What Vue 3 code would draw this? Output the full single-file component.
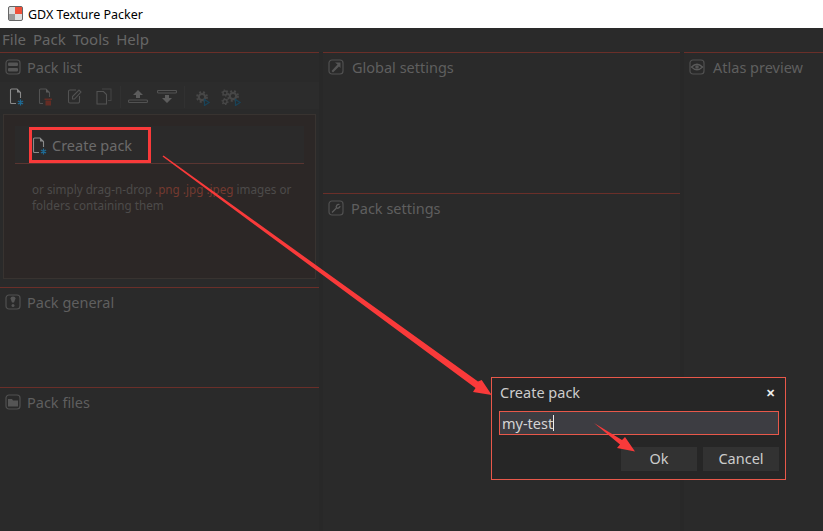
<script setup>
const menus = ['File', 'Pack', 'Tools', 'Help']
</script>

<template>
  <div class="win">
    <header class="titlebar">
      <svg class="logo" width="16" height="16" viewBox="0 0 16 16">
        <rect x="0.500" y="0.500" width="14" height="14" rx="1.500" fill="#ddd" stroke="#666" />
        <rect x="7" y="1" width="7" height="7" fill="#f0503a" />
        <rect x="1" y="8" width="6" height="6" fill="#999" />
      </svg>
      <span>GDX Texture Packer</span>
    </header>
    <nav class="menubar">
      <span v-for="m in menus" :key="m">{{ m }}</span>
    </nav>
    <main class="columns">
      <section class="col left">
        <div class="panel list">
          <h2 class="head">
            <svg class="hicon" viewBox="0 0 16 16"><rect x="1" y="1" width="14" height="14" rx="3" /><rect class="fill" x="3" y="3.500" width="10" height="3.500" rx="1" /><rect class="fill" x="3" y="9" width="10" height="3.500" rx="1" /></svg>
            Pack list
          </h2>
          <div class="toolbar">
            <div class="tools">
              <svg width="16" height="19" viewBox="0 0 16 19"><path class="doc hi" d="M7 16.500H2.500A1 1 0 0 1 1.500 15.500V3A1 1 0 0 1 2.500 2H8L11.500 5.500V11" /><path class="solid hi" d="M8 2L11.500 5.500H8Z" /><path class="star" d="M11.500 12.500v6M8.900 14l5.200 3M14.100 14l-5.200 3" /></svg>
              <svg width="16" height="19" viewBox="0 0 16 19"><path class="doc" d="M5 16.500H2.500A1 1 0 0 1 1.500 15.500V3A1 1 0 0 1 2.500 2H8L11.500 5.500V10" /><path class="solid" d="M8 2L11.500 5.500H8Z" /><rect x="7.500" y="13.500" width="5.500" height="5" fill="#652c24" /><rect x="6.500" y="11.500" width="7.500" height="1.500" fill="#652c24" /></svg>
              <svg width="16" height="19" viewBox="0 0 16 19"><path class="doc" d="M9 3H3A1.500 1.500 0 0 0 1.500 4.500V14.500A1.500 1.500 0 0 0 3 16H11A1.500 1.500 0 0 0 12.500 14.500V9" /><path class="doc" d="M5.500 12V9.500L12 3L14 5L7.500 12Z" /></svg>
              <svg width="16" height="19" viewBox="0 0 16 19"><path class="doc dim" d="M6 2H15V13.500H12" /><path class="doc" d="M1 4.500H7.500L10.500 7.500V17H1Z" /></svg>
            </div>
            <i class="sep" />
            <div class="tools wide">
              <svg width="20" height="14" viewBox="0 0 20 14"><path class="solid" d="M10 0L15 5H12V8H8V5H5Z" /><rect class="doc" x="0.500" y="10" width="19" height="2.500" rx="1" /></svg>
              <svg width="20" height="14" viewBox="0 0 20 14"><rect class="doc" x="0.500" y="0.500" width="19" height="2.500" rx="1" /><path class="solid" d="M10 13L5 8H8V5H12V8H15Z" /></svg>
            </div>
            <i class="sep" />
            <div class="tools gears">
              <svg width="16" height="18" viewBox="0 0 16 18"><circle class="gear" cx="6" cy="9" r="3.200" /><circle class="teeth" cx="6" cy="9" r="5" /><path class="play" d="M8.500 11.500L13 14.500L8.500 17.500Z" /></svg>
              <svg width="21" height="18" viewBox="0 0 21 18"><circle class="gear small" cx="4" cy="5" r="2" /><circle class="teeth small" cx="4" cy="5" r="3" /><circle class="gear small" cx="4" cy="13.500" r="2" /><circle class="teeth small" cx="4" cy="13.500" r="3" /><circle class="gear" cx="12" cy="8" r="3.200" /><circle class="teeth" cx="12" cy="8" r="5" /><path class="play" d="M14.500 11.500L19 14.500L14.500 17.500Z" /></svg>
            </div>
          </div>
          <div class="body">
            <div class="create">
              <div class="create-row">
                <svg width="16" height="19" viewBox="0 0 16 19"><path class="doc hi" d="M7 16.500H2.500A1 1 0 0 1 1.500 15.500V3A1 1 0 0 1 2.500 2H8L11.500 5.500V11" /><path class="solid hi" d="M8 2L11.500 5.500H8Z" /><path class="star" d="M11.500 12.500v6M8.900 14l5.200 3M14.100 14l-5.200 3" /></svg>
                <span>Create pack</span>
              </div>
            </div>
            <p class="hint">or simply drag-n-drop <b>.png .jpg .jpeg</b> images or folders containing them</p>
          </div>
        </div>
        <div class="panel general">
          <h2 class="head">
            <svg class="hicon" viewBox="0 0 16 16"><rect x="1" y="1" width="14" height="14" rx="3" /><path class="fill" d="M5.500 4.500A2.500 2 0 0 1 10.500 4.500L9 8.500H7Z" /><circle class="fill" cx="8" cy="11.500" r="1.500" /></svg>
            Pack general
          </h2>
        </div>
        <div class="panel files">
          <h2 class="head">
            <svg class="hicon" viewBox="0 0 16 16"><rect x="1" y="1" width="14" height="14" rx="3" /><path class="fill" d="M3 5H7L8 6.500H13V12.500H3Z" /></svg>
            Pack files
          </h2>
        </div>
      </section>
      <section class="col middle">
        <div class="panel global">
          <h2 class="head atlas">
            <svg class="hicon" viewBox="0 0 16 16"><rect x="1" y="1" width="14" height="14" rx="3" /><path class="fill" d="M7 3.500H12.500V9L11 7.500L5 13.500L3.500 12L9.500 5.500Z" /></svg>
            Global settings
          </h2>
        </div>
        <div class="panel settings">
          <h2 class="head wide-gap">
            <svg class="hicon" viewBox="0 0 16 16"><rect x="1" y="1" width="14" height="14" rx="3" /><path class="wrench" d="M4 12.500L8.500 8M8.500 8A2.500 2.500 0 0 1 11.500 4.500M8.500 8A2.500 2.500 0 0 0 12 6" /></svg>
            Pack settings
          </h2>
        </div>
      </section>
      <section class="col right">
        <div class="panel preview">
          <h2 class="head atlas">
            <svg class="hicon" viewBox="0 0 16 16"><rect x="1" y="1" width="14" height="14" rx="3" /><path class="wrench" d="M2.500 8Q8 2.500 13.500 8Q8 13.500 2.500 8Z" /><circle class="fill" cx="8" cy="8" r="1.800" /></svg>
            Atlas preview
          </h2>
        </div>
      </section>
    </main>

    <div class="dialog">
      <div class="dlg-title"><span>Create pack</span><b>✕</b></div>
      <div class="input">my-test<i class="caret" /></div>
      <div class="actions">
        <button type="button">Ok</button>
        <button type="button">Cancel</button>
      </div>
    </div>

    <svg class="marks" width="823" height="531" viewBox="0 0 823 531">
      <rect x="30.500" y="128.500" width="119" height="33" fill="none" stroke="#f93a3a" stroke-width="3" />
      <path d="M163.500 155.500L478 381.500L481.700 380L491.700 395L473 392L475.500 388L162.500 156.500Z" fill="#f93a3a" />
      <path d="M594 423L622 440L625 437L635 451.500L617 448L620 444.500Z" fill="#f93a3a" />
    </svg>
  </div>
</template>

<style scoped>
.win {
  position: relative;
  width: 823px;
  height: 531px;
  overflow: hidden;
  display: flex;
  flex-direction: column;
  background: #2a2a2a;
  font-family: "Noto Sans", "Open Sans", sans-serif;
  color: #626262;
}
.titlebar {
  height: 28px;
  flex: none;
  background: #fff;
  display: flex;
  align-items: center;
  gap: 4px;
  padding-left: 8px;
  color: #000;
  font-size: 12.500px;
}
.menubar {
  height: 24px;
  box-sizing: border-box;
  flex: none;
  display: flex;
  align-items: center;
  gap: 7px;
  padding: 0 0 2px 2px;
  font-size: 15px;
  color: #666;
}
.columns {
  flex: 1;
  min-height: 0;
  display: flex;
  gap: 4px;
  background: #282828;
}
.col {
  display: flex;
  flex-direction: column;
  background: #2a2a2a;
}
.left { width: 319px; }
.middle { width: 357px; }
.right { flex: 1; }
.panel {
  box-sizing: border-box;
  border-top: 1px solid #6a2f29;
  min-height: 0;
}
.list { height: 235px; }
.general { height: 100px; }
.files { flex: 1; }
.global { height: 141px; }
.settings { flex: 1; }
.preview { flex: 1; }
.head {
  margin: 0;
  height: 29px;
  box-sizing: border-box;
  display: flex;
  align-items: center;
  gap: 6px;
  padding: 0 0 2px 5px;
  font-size: 14.500px;
  font-weight: 400;
  color: #5f5f5f;
}
.head.wide-gap { gap: 7px; }
.head.atlas { gap: 8px; }
.hicon {
  width: 16px;
  height: 16px;
  fill: none;
  stroke: #505050;
  stroke-width: 1.200;
  flex: none;
}
.hicon .fill { fill: #555; stroke: none; }
.hicon .wrench { stroke: #5a5a5a; stroke-width: 1.300; fill: none; }
.toolbar {
  height: 27px;
  box-sizing: border-box;
  display: flex;
  align-items: center;
  padding: 2px 0 0 9px;
  background: #2c2c2c;
}
.tools {
  display: flex;
  align-items: center;
  gap: 13px;
}
.tools.wide { gap: 9px; margin: 0 7px; }
.tools.gears { gap: 9px; margin-left: 11px; align-items: flex-start; }
.sep {
  width: 1px;
  height: 22px;
  background: #313131;
  margin-left: 8px;
}
.tools.wide + .sep { margin-left: 0; }
.doc { fill: none; stroke: #525252; stroke-width: 1.100; }
.doc.hi { stroke: #8a8a8a; }
.doc.dim { stroke: #444; }
.solid { fill: #5c5c5c; }
.solid.hi { fill: #8a8a8a; }
.star { stroke: #1f6a94; stroke-width: 1.300; fill: none; }
.gear { fill: none; stroke: #474747; stroke-width: 2.200; }
.gear.small { stroke-width: 1.400; }
.teeth { fill: none; stroke: #474747; stroke-width: 1.800; stroke-dasharray: 2 2; }
.teeth.small { stroke-width: 1.200; stroke-dasharray: 1.500 1.600; }
.play { fill: #2a2a2a; stroke: #1a4358; stroke-width: 1.300; }
.body {
  box-sizing: border-box;
  margin: 5px 3px 0 3px;
  height: 165px;
  border: 1px solid #383330;
  background: #2c2726;
  padding-top: 11px;
}
.create {
  margin: 0 11px;
  height: 38px;
  border-bottom: 1px solid #5a3531;
  background: #2b2a2a;
  box-sizing: border-box;
}
.create-row {
  display: flex;
  align-items: center;
  gap: 3px;
  padding: 9px 0 0 17px;
  font-size: 14.500px;
  color: #6b6b6b;
}
.create-row span { margin-left: 1px; }
.hint {
  margin: 17px 16px 0 28px;
  font-size: 11.700px;
  line-height: 16px;
  color: #4d4b4a;
}
.hint b { font-weight: 400; color: #743a30; }
.dialog {
  position: absolute;
  left: 491px;
  top: 377px;
  width: 295px;
  height: 103px;
  box-sizing: border-box;
  border: 1px solid #e8584a;
  background: #262626;
  padding: 0 6px 0 7px;
  color: #ccc;
}
.dlg-title {
  height: 28px;
  display: flex;
  align-items: center;
  justify-content: space-between;
  padding: 0 1px;
  font-size: 14.500px;
}
.dlg-title b {
  font-size: 11px;
  color: #eee;
  margin-right: 3px;
}
.input {
  margin-top: 5px;
  height: 24px;
  box-sizing: border-box;
  border: 1px solid #e8584a;
  background: #3d3d42;
  padding-left: 2px;
  display: flex;
  align-items: center;
  font-size: 14.500px;
  color: #d4d4d4;
}
.caret {
  width: 1px;
  height: 16px;
  background: #eee;
}
.actions {
  margin-top: 12px;
  display: flex;
  justify-content: flex-end;
  gap: 6px;
}
.actions button {
  width: 76px;
  height: 24px;
  border: 0;
  padding: 0 0 2px;
  background: #323232;
  color: #ccc;
  font: inherit;
  font-size: 14.500px;
}
.marks {
  position: absolute;
  left: 0;
  top: 0;
  pointer-events: none;
}
</style>
